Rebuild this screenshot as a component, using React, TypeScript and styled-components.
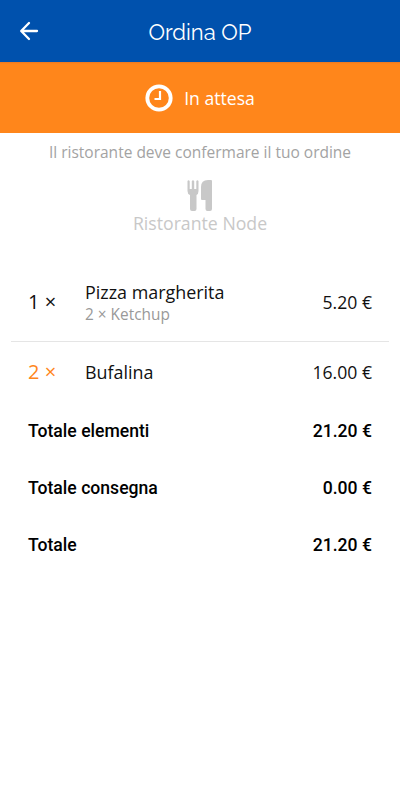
import React from "react";
import styled, { createGlobalStyle } from "styled-components";

const Global = createGlobalStyle`
  *{box-sizing:border-box}
  body{margin:0;background:#fff;font-family:"Open Sans",sans-serif;color:#000}
`;
const Screen = styled.main`width:400px;height:800px;display:flex;flex-direction:column;overflow:hidden;background:#fff;`;
const Header = styled.header`height:62px;flex:none;background:#0051ad;display:grid;grid-template-columns:58px 1fr 58px;align-items:center;color:#fff;`;
const Back = styled.button`border:0;padding:0;background:none;color:#fff;display:flex;justify-content:center;`;
const Title = styled.h1`margin:2px 0 0;font:400 22px/30px Raleway,Lato,sans-serif;text-align:center;`;
const Status = styled.section`height:71px;flex:none;background:linear-gradient(#e97822,#ff861b 2px);color:#fff;display:flex;align-items:center;justify-content:center;gap:11px;font-size:17.6px;`;
const Note = styled.p`margin:8px 0 0;text-align:center;font-size:15.5px;line-height:22px;color:#a3a3a3;`;
const Restaurant = styled.section`height:100px;padding-top:17px;display:flex;flex-direction:column;align-items:center;color:#c8c8c8;font-size:17.7px;line-height:24px;`;
const Item = styled.div<{ $divided?: boolean; $height: number }>`
  height:${p => p.$height}px;margin:0 11px;padding:0 17px;display:grid;grid-template-columns:57px 1fr auto;align-items:center;font-size:17.9px;line-height:24px;
  border-bottom:${p => (p.$divided ? "1px solid #e5e5e5" : "0")};
`;
const Quantity = styled.span<{ $accent?: boolean }>`font-size:20px;color:${p => (p.$accent ? "#ff861b" : "#111")};`;
const Product = styled.div`color:#111;`;
const Extra = styled.div`font-size:15.4px;line-height:21px;color:#999;`;
const Price = styled.span`font-size:17.6px;color:#111;`;
const Totals = styled.section`padding-top:1px;`;
const Total = styled.div`height:57px;padding:0 28px;display:flex;justify-content:space-between;align-items:center;font:500 17.6px/24px Roboto,sans-serif;`;

export default function App() {
  return <><Global /><Screen>
    <Header><Back aria-label="Indietro"><svg width="20" height="20" viewBox="0 0 20 20" fill="none" stroke="currentColor" strokeWidth="2.3" strokeLinecap="round" strokeLinejoin="round"><path d="M18 10H2.5M10 2 2.2 10l7.8 8" /></svg></Back><Title>Ordina OP</Title></Header>
    <Status><svg width="28" height="28" viewBox="0 0 28 28" fill="none" stroke="currentColor"><circle cx="14" cy="14" r="11.7" strokeWidth="3.8" /><path d="M15 7v8h-5.5" strokeWidth="2.2" /></svg><span>In attesa</span></Status>
    <Note>Il ristorante deve confermare il tuo ordine</Note>
    <Restaurant><svg width="26" height="31" viewBox="0 0 26 31" fill="currentColor"><path d="M.5 1Q1.5-.5 2.7 1V9H4.8V1Q6-.5 7.2 1V9H9.3V1Q10.5-.5 11.5 1V11Q11.5 14 9.5 15V29Q9.5 31 7.5 31H5Q3 31 3 29V15Q.5 14 .5 11ZM25 1V29Q25 31 23 31H20.5Q18.5 31 18.5 29V20H15Q14 20 14 19V7Q14 0 21 0H24Q25 0 25 1Z" /></svg><span>Ristorante Node</span></Restaurant>
    <Item $height={79} $divided><Quantity>1 ×</Quantity><Product>Pizza margherita<Extra>2 × Ketchup</Extra></Product><Price>5.20 €</Price></Item>
    <Item $height={59}><Quantity $accent>2 ×</Quantity><Product>Bufalina</Product><Price>16.00 €</Price></Item>
    <Totals>
      <Total><span>Totale elementi</span><span>21.20 €</span></Total>
      <Total><span>Totale consegna</span><span>0.00 €</span></Total>
      <Total><span>Totale</span><span>21.20 €</span></Total>
    </Totals>
  </Screen></>;
}
